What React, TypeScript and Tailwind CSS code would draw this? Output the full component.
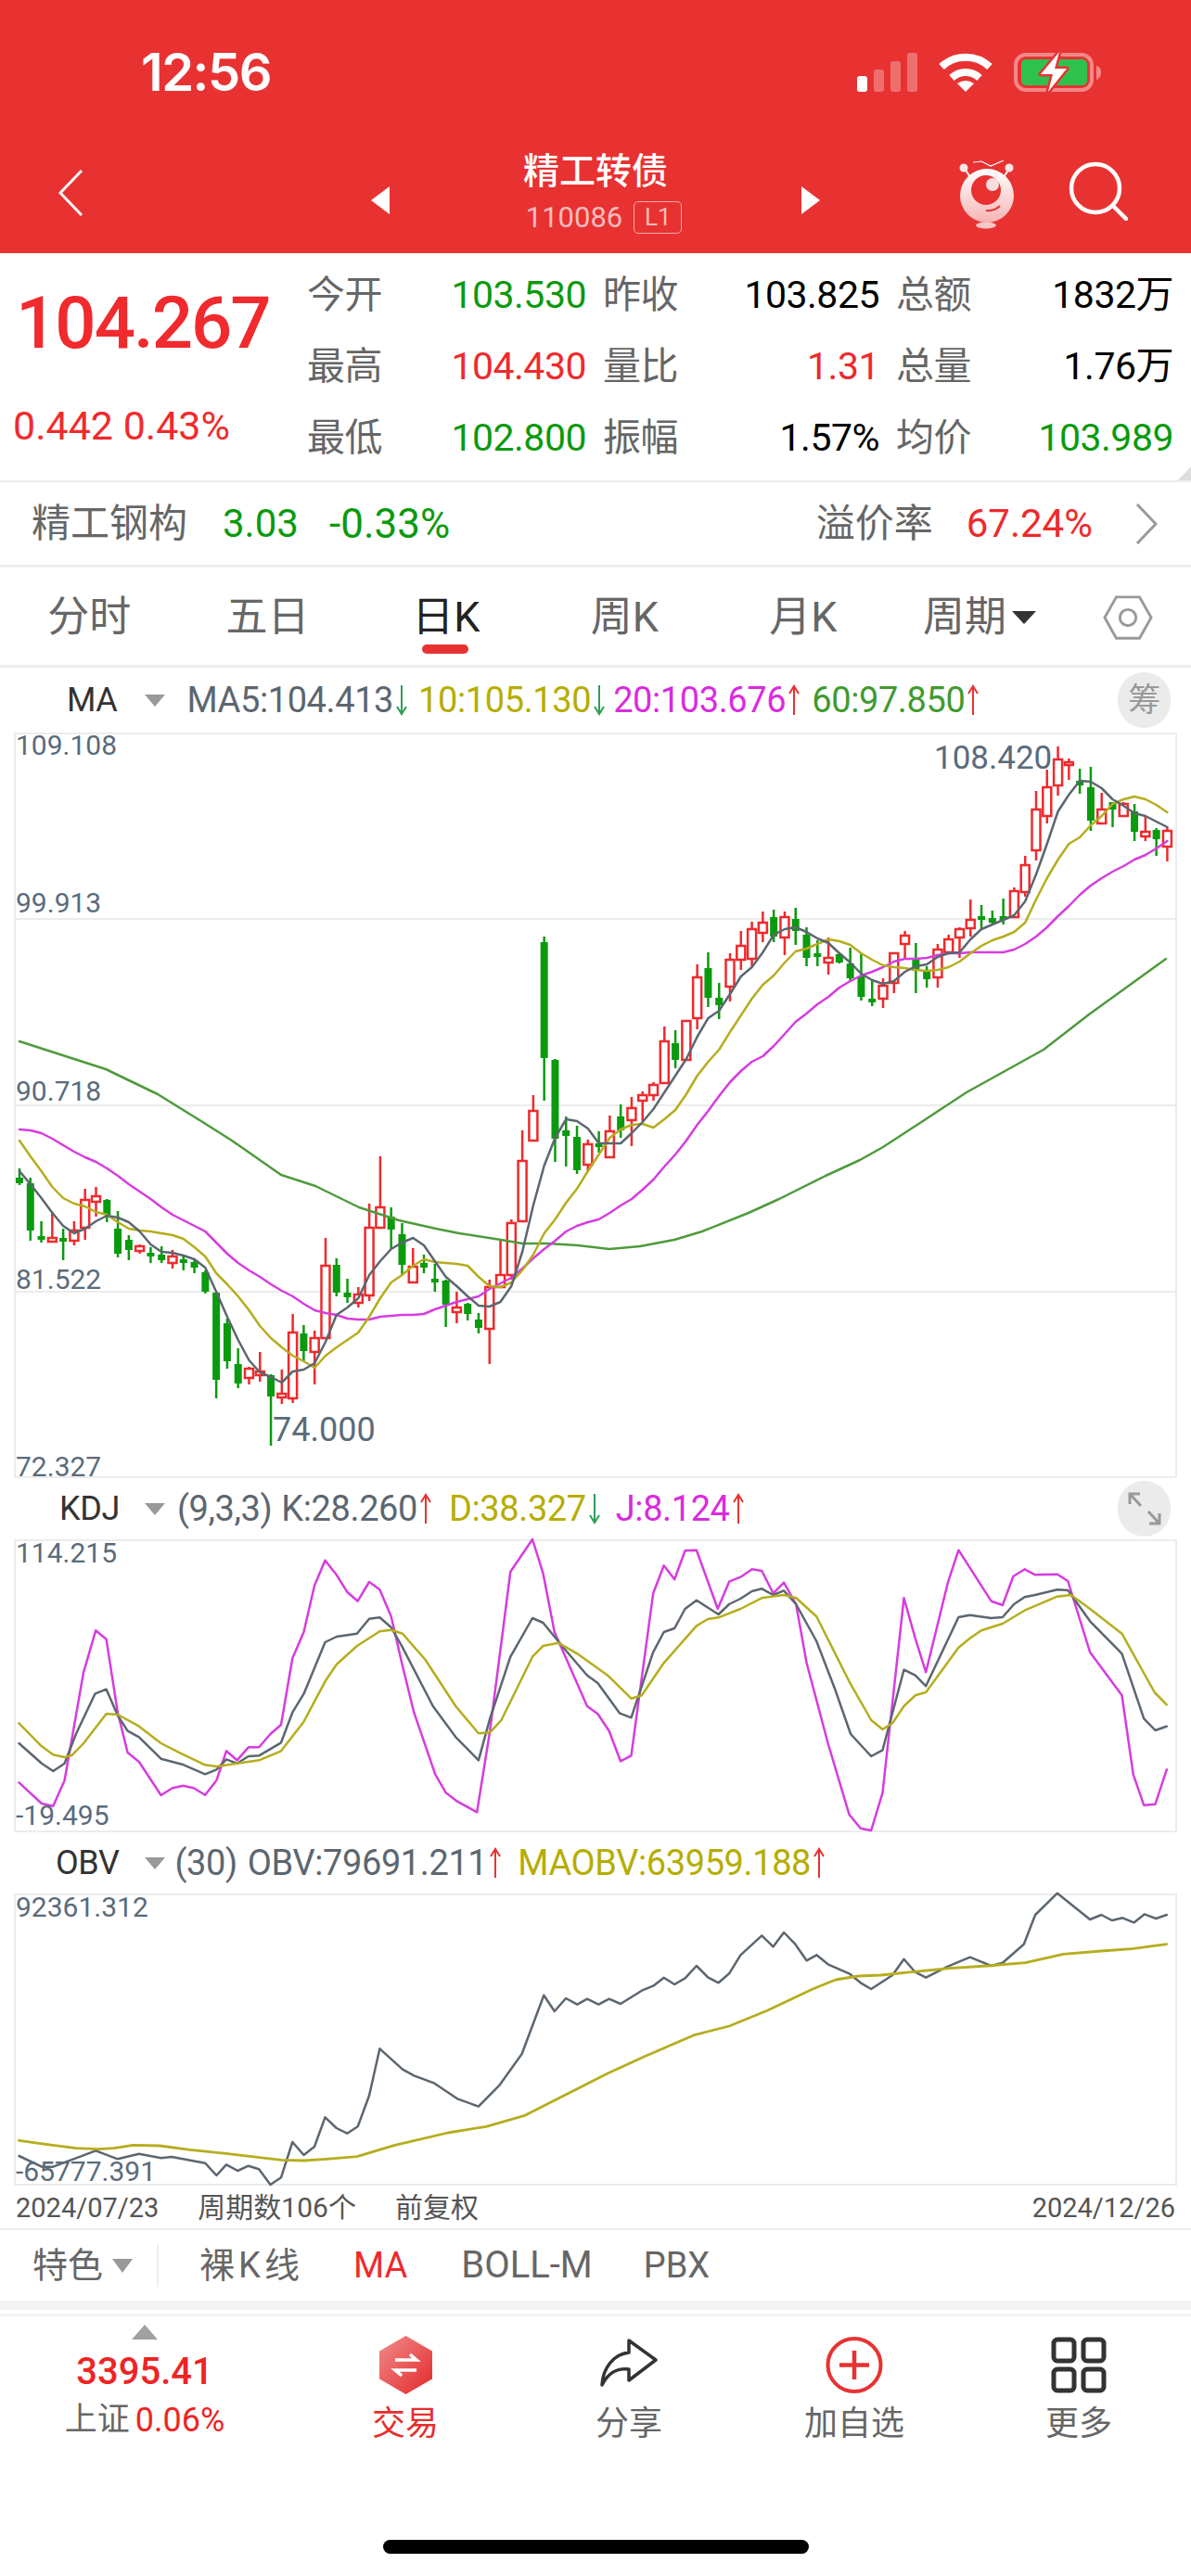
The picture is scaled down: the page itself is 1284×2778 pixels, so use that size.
import type { ReactNode } from 'react';

const RED = '#ee2a2d';
const GREEN = '#0a9a0e';
const C_GRAY = '#5c6670';
const C_OLIVE = '#b5ad1e';
const C_PINK = '#d63ce0';
const C_GREEN = '#4e9a3c';

// [up, high, bodyTop, bodyBottom, low] in page pixels
type Candle = [number, number, number, number, number];
const candles: Candle[] = [
  [0, 1260, 1270, 1276, 1278], [0, 1270, 1276, 1327, 1338], [0, 1317, 1333, 1337, 1340], [1, 1307, 1335, 1339, 1339],
  [0, 1325, 1335, 1337, 1359], [1, 1317, 1327, 1338, 1343], [1, 1282, 1294, 1324, 1337], [1, 1280, 1290, 1296, 1312],
  [0, 1293, 1294, 1310, 1318], [0, 1306, 1325, 1352, 1356], [0, 1332, 1337, 1348, 1359], [1, 1342, 1344, 1349, 1352],
  [0, 1345, 1351, 1353, 1362], [0, 1344, 1353, 1359, 1362], [1, 1348, 1355, 1362, 1368], [0, 1353, 1358, 1360, 1370],
  [0, 1359, 1361, 1367, 1373], [0, 1370, 1372, 1393, 1395], [0, 1393, 1394, 1488, 1508], [0, 1422, 1427, 1468, 1476],
  [0, 1454, 1471, 1492, 1497], [1, 1474, 1476, 1486, 1493], [1, 1458, 1479, 1483, 1490], [0, 1482, 1483, 1506, 1559],
  [1, 1477, 1503, 1507, 1514], [1, 1417, 1437, 1508, 1513], [0, 1429, 1438, 1457, 1468], [1, 1435, 1443, 1458, 1493],
  [1, 1335, 1365, 1443, 1443], [0, 1357, 1364, 1394, 1398], [0, 1379, 1394, 1399, 1405], [1, 1388, 1396, 1405, 1410],
  [1, 1298, 1324, 1397, 1403], [1, 1247, 1302, 1324, 1324], [0, 1302, 1312, 1326, 1347], [0, 1319, 1331, 1364, 1375],
  [1, 1346, 1366, 1383, 1383], [0, 1353, 1362, 1367, 1373], [0, 1363, 1379, 1382, 1393], [0, 1380, 1381, 1407, 1431],
  [1, 1393, 1410, 1415, 1427], [0, 1405, 1406, 1417, 1424], [0, 1416, 1423, 1432, 1438], [1, 1380, 1388, 1433, 1471],
  [1, 1336, 1375, 1388, 1388], [1, 1315, 1319, 1375, 1380], [1, 1219, 1252, 1317, 1317], [1, 1181, 1198, 1230, 1230],
  [0, 1010, 1016, 1141, 1187], [0, 1142, 1143, 1228, 1253], [0, 1204, 1219, 1225, 1258], [0, 1214, 1226, 1262, 1266],
  [1, 1229, 1234, 1256, 1264], [0, 1220, 1233, 1236, 1243], [1, 1203, 1220, 1248, 1248], [0, 1191, 1204, 1219, 1227],
  [1, 1183, 1195, 1208, 1236], [1, 1177, 1181, 1187, 1209], [1, 1167, 1170, 1181, 1187], [1, 1107, 1123, 1168, 1168],
  [0, 1111, 1125, 1143, 1152], [1, 1100, 1101, 1143, 1143], [1, 1040, 1054, 1098, 1110], [0, 1027, 1044, 1076, 1086],
  [0, 1060, 1076, 1084, 1099], [1, 1028, 1035, 1064, 1080], [1, 1004, 1020, 1035, 1046], [1, 994, 1002, 1034, 1042],
  [1, 983, 995, 1006, 1016], [0, 981, 989, 1010, 1016], [1, 983, 989, 1011, 1030], [0, 979, 991, 1004, 1019],
  [0, 1000, 1008, 1033, 1042], [0, 1014, 1028, 1032, 1042], [1, 1011, 1033, 1038, 1051], [0, 1027, 1029, 1038, 1039],
  [0, 1022, 1039, 1055, 1059], [0, 1028, 1053, 1075, 1079], [0, 1056, 1077, 1080, 1085], [1, 1055, 1063, 1077, 1087],
  [1, 1027, 1028, 1060, 1071], [1, 1004, 1009, 1018, 1035], [0, 1017, 1033, 1047, 1071], [0, 1042, 1048, 1056, 1065],
  [1, 1018, 1024, 1054, 1065], [1, 1008, 1013, 1027, 1027], [1, 1000, 1002, 1011, 1033], [1, 970, 992, 1001, 1010],
  [0, 976, 988, 992, 1003], [0, 982, 990, 995, 997], [0, 969, 988, 992, 997], [1, 957, 961, 989, 989],
  [1, 923, 933, 962, 967], [1, 853, 873, 917, 928], [1, 830, 849, 880, 888], [1, 805, 819, 847, 858],
  [1, 818, 822, 825, 841], [0, 829, 842, 847, 856], [0, 827, 849, 885, 896], [1, 855, 873, 888, 888],
  [0, 865, 865, 873, 892], [1, 865, 867, 880, 880], [0, 867, 875, 897, 907], [1, 881, 897, 902, 907],
  [0, 893, 895, 905, 923], [1, 892, 896, 913, 929],
];

const ma5 = [1263,1277,1292,1308,1322,1330,1325,1317,1311,1313,1318,1328,1342,1350,1351,1354,1358,1367,1393,1420,1445,1467,1480,1485,1491,1479,1477,1470,1447,1418,1410,1400,1375,1360,1347,1340,1335,1343,1360,1377,1387,1398,1408,1409,1404,1387,1350,1300,1257,1227,1207,1209,1217,1233,1233,1233,1222,1210,1196,1178,1160,1142,1118,1098,1090,1072,1053,1043,1027,1008,1002,1000,1005,1012,1017,1028,1038,1050,1057,1061,1058,1048,1042,1040,1032,1028,1027,1013,1002,997,992,987,972,943,910,875,857,842,843,850,862,869,877,880,886,892];
const ma10 = [1230,1247,1263,1280,1292,1298,1301,1307,1310,1318,1325,1327,1328,1330,1332,1336,1345,1355,1373,1385,1398,1413,1430,1443,1453,1462,1468,1475,1462,1453,1445,1437,1420,1400,1383,1375,1365,1358,1361,1362,1363,1365,1377,1387,1388,1383,1370,1353,1330,1315,1297,1282,1263,1245,1227,1218,1213,1212,1216,1207,1197,1180,1160,1145,1132,1113,1095,1077,1062,1052,1038,1026,1023,1018,1013,1015,1019,1028,1035,1041,1043,1044,1046,1047,1046,1043,1037,1028,1020,1014,1010,1005,995,970,947,927,910,903,890,880,867,862,859,862,868,876];
const ma20 = [1218,1219,1222,1228,1235,1242,1248,1253,1260,1268,1277,1285,1293,1302,1310,1316,1322,1328,1340,1352,1362,1370,1377,1385,1392,1398,1406,1413,1416,1418,1422,1423,1423,1420,1419,1418,1418,1417,1412,1408,1404,1401,1398,1390,1384,1378,1368,1357,1347,1338,1328,1322,1318,1315,1308,1300,1293,1283,1272,1258,1245,1230,1213,1198,1182,1167,1155,1145,1139,1128,1115,1102,1093,1083,1075,1065,1058,1052,1048,1043,1037,1034,1034,1033,1030,1028,1028,1027,1027,1027,1027,1024,1018,1010,1000,988,977,965,955,947,940,934,927,922,915,907];
const ma60Pts = '21,1123 114,1153 170,1180 220,1211 250,1230 303,1267 340,1279 387,1302 430,1316 470,1325 495,1330 540,1337 563,1341 590,1341 623,1343 657,1347 690,1344 727,1337 757,1328 807,1308 840,1293 890,1268 927,1251 952,1237 1001,1205 1042,1178 1125,1132 1174,1094 1257,1034';

const kdjK = [25,900,55,965,70,990,85,965,100,870,125,740,140,725,155,810,168,860,183,880,212,950,240,968,270,1000,285,985,298,952,312,965,327,942,341,940,370,898,385,800,400,740,428,573,443,555,470,545,486,497,500,493,515,525,530,590,570,780,600,880,630,955,645,820,672,620,701,495,715,510,745,600,773,680,787,705,816,803,831,817,860,605,874,540,888,528,902,465,917,437,946,483,960,450,975,432,990,408,1003,400,1018,420,1032,406,1048,450,1075,570,1100,730,1120,870,1147,942,1162,922,1190,662,1205,680,1219,715,1262,492,1277,485,1305,495,1320,492,1335,450,1349,427,1363,420,1392,403,1406,405,1435,505,1477,610,1506,820,1521,858,1536,845];
const kdjD = [25,835,55,910,70,937,85,945,95,938,110,900,140,805,155,807,183,845,212,900,240,935,270,970,285,975,312,965,341,955,370,925,400,830,428,700,443,645,470,585,500,538,515,533,530,545,560,630,600,780,630,868,645,865,660,825,701,620,715,585,735,575,760,610,800,680,831,755,845,745,874,640,917,520,932,498,946,493,975,465,1003,430,1032,420,1048,430,1075,490,1118,700,1147,825,1162,855,1175,835,1190,780,1205,745,1219,735,1262,590,1277,560,1292,535,1320,513,1349,470,1392,425,1410,420,1435,465,1477,545,1520,735,1536,775];
const kdjJ = [25,1027,55,1095,70,1103,85,1020,110,670,126,535,140,563,155,800,168,930,183,960,212,1068,227,1045,241,1037,255,1045,270,1067,285,1020,298,925,312,955,327,913,341,913,356,870,370,840,385,625,400,540,414,390,428,308,443,355,457,410,471,440,486,378,500,403,515,490,530,650,545,800,573,1000,587,1060,602,1088,628,1123,645,860,672,345,701,240,715,350,730,540,773,780,787,805,802,860,817,958,831,940,860,415,874,325,888,370,902,277,917,275,945,465,960,377,975,362,990,337,1003,342,1018,415,1032,380,1048,450,1062,640,1090,900,1118,1130,1133,1175,1147,1182,1162,1060,1190,430,1205,560,1219,670,1248,380,1262,275,1305,440,1320,453,1334,360,1349,337,1363,355,1392,353,1406,375,1435,605,1477,745,1492,1000,1506,1100,1521,1097,1536,985];
const obv = [25,975,55,1010,70,1010,126,958,155,985,183,968,212,982,226,978,270,998,285,1038,298,1003,313,1023,327,1007,341,1018,356,1068,370,1045,385,930,400,972,414,945,428,850,443,885,457,902,471,880,486,780,500,628,530,695,545,715,572,740,602,790,630,815,658,745,687,645,716,455,730,507,745,465,760,485,773,467,788,485,802,467,817,483,845,440,860,425,874,398,888,420,902,400,917,360,932,397,946,415,960,385,975,325,1003,262,1018,298,1032,252,1047,290,1062,343,1075,325,1090,355,1118,385,1133,415,1147,435,1175,390,1190,338,1205,380,1219,398,1248,362,1277,332,1305,360,1320,350,1348,290,1363,195,1392,125,1435,210,1450,195,1464,213,1478,205,1493,220,1507,193,1522,207,1536,195];
const maobv = [25,925,60,937,100,950,130,953,150,950,175,940,210,942,250,955,300,968,370,988,400,990,430,985,470,977,520,940,590,900,640,880,690,845,750,770,800,708,850,652,915,583,960,555,1010,505,1070,435,1100,405,1130,393,1160,390,1200,380,1250,368,1300,360,1350,350,1400,322,1450,312,1490,305,1536,290];

const candleX = (i: number) => 21 + i * 11.785;
const byIndex = (ys: number[]) => ys.map((y, i) => `${candleX(i).toFixed(1)},${y}`).join(' ');
// traced pairs are in the squeezed crop's coordinates
const traced = (pts: number[], top: number) => {
  const out: string[] = [];
  for (let i = 0; i < pts.length; i += 2) out.push(`${(pts[i] / 1.2212).toFixed(1)},${(top + pts[i + 1] / 3).toFixed(1)}`);
  return out.join(' ');
};

function Line({ points, color, width = 2.5 }: { points: string; color: string; width?: number }) {
  return <polyline points={points} fill="none" stroke={color} strokeWidth={width} strokeLinejoin="round" strokeLinecap="round" />;
}

function Panel({ h, viewBox, children, labels }: { h: string; viewBox: string; children: ReactNode; labels: ReactNode }) {
  return (
    <div className={`relative mx-[15px] w-[1254px] shrink-0 border-2 border-[#ececec] ${h}`}>
      <svg className="block h-full w-full overflow-visible" viewBox={viewBox}>
        {children}
      </svg>
      {labels}
    </div>
  );
}

function AxisLabel({ top, children }: { top: string; children: ReactNode }) {
  return <span className={`absolute left-0 text-[30px] leading-none text-[#5a6b7b] ${top}`}>{children}</span>;
}

function Arrow({ up, color }: { up?: boolean; color: string }) {
  return (
    <svg className="ml-[1px] shrink-0" width="16" height="34" viewBox="0 0 16 34" fill="none" stroke={color} strokeWidth="2">
      {up ? <path d="M8 33V2M3 10L8 2L13 10" /> : <path d="M8 1V32M3 24L8 32L13 24" />}
    </svg>
  );
}

function Caret({ className = '' }: { className?: string }) {
  return <span className={`h-0 w-0 border-x-[11px] border-t-[13px] border-x-transparent border-t-[#999] ${className}`} />;
}

function StatusIcons() {
  return (
    <div className="flex items-center pr-[95px]">
      <svg width="66" height="42" viewBox="0 0 66 42">
        <rect x="0" y="25" width="11" height="17" rx="3" fill="#fff" />
        <rect x="18" y="18" width="11" height="24" rx="3" fill="#fff" opacity=".3" />
        <rect x="36" y="9" width="11" height="33" rx="3" fill="#fff" opacity=".3" />
        <rect x="54" y="0" width="11" height="42" rx="3" fill="#fff" opacity=".3" />
      </svg>
      <svg className="ml-[22px]" width="58" height="42" viewBox="0 0 58 42" fill="none" stroke="#fff">
        <path d="M3 15A38 38 0 0 1 55 15" strokeWidth="8" />
        <path d="M14 27A22 22 0 0 1 44 27" strokeWidth="8" />
        <path d="M20 33Q29 27 38 33L29 42Z" fill="#fff" stroke="none" />
      </svg>
      <svg className="ml-[23px]" width="96" height="46" viewBox="0 0 96 46">
        <rect x="2" y="4" width="82" height="38" rx="11" fill="none" stroke="#fff" strokeOpacity=".42" strokeWidth="4" />
        <rect x="8" y="9" width="71" height="28" rx="5" fill="#2fc14e" />
        <path d="M89 16C93 17 94 20 94 23C94 26 93 29 89 31Z" fill="#fff" opacity=".42" />
        <path d="M49 1L29 25H42L37 44L57 19H44Z" fill="#fff" stroke="#e83232" strokeWidth="5" paintOrder="stroke" strokeLinejoin="round" />
      </svg>
    </div>
  );
}

function RobotIcon() {
  return (
    <svg width="60" height="74" viewBox="1034 170 60 74">
      <defs>
        <linearGradient id="ball" x1="0" y1="0" x2="0" y2="1">
          <stop offset="0" stopColor="#fff" />
          <stop offset="1" stopColor="#f7b4b4" />
        </linearGradient>
      </defs>
      <path d="M1049 172L1058 171L1068 176L1082 170" fill="none" stroke="#fff" strokeWidth="1.2" />
      <path d="M1040 179L1046 188M1088 179L1082 188" stroke="#fff" strokeWidth="2" />
      <circle cx="1039" cy="178" r="4.5" fill="#fde6e6" />
      <circle cx="1088" cy="178" r="4.5" fill="#fde6e6" />
      <circle cx="1064" cy="208" r="29" fill="url(#ball)" />
      <circle cx="1063" cy="202" r="16" fill="#e83232" />
      <circle cx="1070" cy="196" r="7" fill="#fbdede" />
      <path d="M1063 224Q1072 225 1078 219" fill="none" stroke="#e83232" strokeWidth="2" />
      <ellipse cx="1063" cy="240" rx="11" ry="3.5" fill="#f8c6c6" />
    </svg>
  );
}

function Header() {
  return (
    <div className="h-[273px] shrink-0 bg-[#e83232] text-white">
      <div className="flex h-[150px] items-center justify-between pl-[152px] pt-[6px]">
        <span className="font-['Inter',sans-serif] text-[56px] font-semibold leading-none tracking-[-1.5px]">12:56</span>
        <StatusIcons />
      </div>
      <div className="flex h-[123px] items-center">
        <div className="-mt-[8px] w-[400px] pl-[63px]">
          <svg className="block" width="26" height="50" viewBox="0 0 26 50" fill="none" stroke="#fff" strokeWidth="3">
            <path d="M25 1L2 25L25 49" />
          </svg>
        </div>
        <span className="mt-[8px] h-0 w-0 border-y-[15px] border-r-[20px] border-y-transparent border-r-white" />
        <div className="flex w-[444px] flex-col items-center pb-[8px]">
          <span className="text-[39px] font-medium leading-[44px]">精工转债</span>
          <div className="mt-[10px] flex items-center gap-[12px] pl-[18px]">
            <span className="text-[31px] leading-[34px] text-[#f7bcbc]">110086</span>
            <span className="flex h-[35px] w-[52px] items-center justify-center rounded-[5px] border-[1.5px] border-[#f3a9a9] text-[26px] text-[#f7bcbc]">L1</span>
          </div>
        </div>
        <span className="mt-[8px] h-0 w-0 border-y-[15px] border-l-[20px] border-y-transparent border-l-white" />
        <div className="-mt-[4px] ml-[150px]">
          <RobotIcon />
        </div>
        <svg className="-mt-[12px] ml-[58px]" width="64" height="64" viewBox="0 0 64 64" fill="none" stroke="#fff" strokeWidth="4.5" strokeLinecap="round">
          <circle cx="29" cy="29" r="26" />
          <path d="M48 48L62 62" />
        </svg>
      </div>
    </div>
  );
}

function Stat({ label, value, color, first }: { label: string; value: string; color: string; first?: boolean }) {
  return (
    <>
      <span className={`text-[41px] text-[#666] ${first ? '' : 'pl-[18px]'}`}>{label}</span>
      <span className={`text-right text-[41px] ${color}`}>{value}</span>
    </>
  );
}

function Quote() {
  return (
    <div className="relative flex h-[247px] shrink-0 border-b-2 border-[#eeeeee]">
      <div className="flex w-[331px] flex-col pl-[14px] pt-[36px]">
        <span className="pl-[3px] text-[78px] font-medium leading-[80px] tracking-[-2px] text-[#f02a2d]">104.267</span>
        <span className="mt-[50px] whitespace-nowrap text-[43px] leading-[40px] text-[#f02a2d]">0.442 0.43%</span>
      </div>
      <div className="grid grid-cols-[83px_218px_100px_216px_100px_217px] grid-rows-[77px_77px_77px] items-center pt-[7px] leading-none tracking-[-0.5px]">
        <Stat first label="今开" value="103.530" color="text-[#0a9a0e]" />
        <Stat label="昨收" value="103.825" color="text-black" />
        <Stat label="总额" value="1832万" color="text-black" />
        <Stat first label="最高" value="104.430" color="text-[#ee2a2d]" />
        <Stat label="量比" value="1.31" color="text-[#ee2a2d]" />
        <Stat label="总量" value="1.76万" color="text-black" />
        <Stat first label="最低" value="102.800" color="text-[#0a9a0e]" />
        <Stat label="振幅" value="1.57%" color="text-black" />
        <Stat label="均价" value="103.989" color="text-[#0a9a0e]" />
      </div>
      <span className="absolute bottom-0 right-0 h-0 w-0 border-b-[15px] border-l-[14px] border-b-[#dddddd] border-l-transparent" />
    </div>
  );
}

function Related() {
  return (
    <div className="flex h-[92px] shrink-0 items-center border-b-[3px] border-[#eeeeee] pl-[34px] text-[42px] leading-none">
      <span className="w-[206px] text-[#666]">精工钢构</span>
      <span className="w-[115px] text-[#0a9a0e]">3.03</span>
      <span className="text-[44px] text-[#0a9a0e]">-0.33%</span>
      <span className="ml-auto text-[#666]">溢价率</span>
      <span className="ml-[36px] text-[#ee2a2d]">67.24%</span>
      <svg className="ml-[46px] mr-[36px]" width="24" height="44" viewBox="0 0 24 44" fill="none" stroke="#999" strokeWidth="3">
        <path d="M2 1L22 22L2 43" />
      </svg>
    </div>
  );
}

function Tabs() {
  return (
    <div className="flex h-[108px] shrink-0 items-center border-b-[3px] border-[#eeeeee] pt-[2px] text-[45px] leading-none text-[#666]">
      <div className="grid w-[962px] grid-cols-5 text-center">
        <span>分时</span>
        <span>五日</span>
        <span className="relative text-[#222]">
          日K
          <span className="absolute left-[70px] top-[52px] h-[10px] w-[50px] rounded-full bg-[#e83232]" />
        </span>
        <span>周K</span>
        <span>月K</span>
      </div>
      <span className="ml-[33px]">周期</span>
      <span className="ml-[6px] h-0 w-0 border-x-[13px] border-t-[14px] border-x-transparent border-t-[#333]" />
      <svg className="ml-[72px]" width="54" height="50" viewBox="0 0 56 50" fill="none" stroke="#999" strokeWidth="3">
        <path d="M15 2H41L54 25L41 48H15L2 25Z" />
        <circle cx="28" cy="25" r="9" />
      </svg>
    </div>
  );
}

function LegendRow({ name, nameClass, children, button, h }: { name: string; nameClass: string; children: ReactNode; button: ReactNode; h: string }) {
  return (
    <div className={`flex shrink-0 items-center text-[38px] leading-none tracking-[-0.4px] ${h}`}>
      <span className={`text-[36px] text-[#333] ${nameClass}`}>{name}</span>
      <Caret className="absolute left-[156px]" />
      {children}
      {button && <div className="ml-auto mr-[22px] flex h-[60px] w-[57px] items-center justify-center rounded-full bg-[#ebebeb]">{button}</div>}
    </div>
  );
}

function MainChart() {
  return (
    <Panel
      h="h-[804px]"
      viewBox="17 792 1250 800"
      labels={
        <>
          <AxisLabel top="top-[-3px]">109.108</AxisLabel>
          <AxisLabel top="top-[167px]">99.913</AxisLabel>
          <AxisLabel top="top-[370px]">90.718</AxisLabel>
          <AxisLabel top="top-[573px]">81.522</AxisLabel>
          <AxisLabel top="top-[775px]">72.327</AxisLabel>
          <span className="absolute left-[277px] top-[732px] text-[36px] leading-none text-[#5a6b7b]">74.000</span>
          <span className="absolute left-[990px] top-[8px] text-[35px] leading-none text-[#5a6b7b]">108.420</span>
        </>
      }
    >
      {[991, 1192, 1393].map(y => (
        <line key={y} x1="17" x2="1267" y1={y} y2={y} stroke="#ececec" strokeWidth="2" />
      ))}
      {candles.map(([up, high, top, bottom, low], i) => {
        const x = candleX(i);
        const h = Math.max(bottom - top, 2);
        if (up) {
          return (
            <g key={i} stroke={RED} fill="none">
              <path d={`M${x} ${high}V${top}M${x} ${bottom}V${low}`} strokeWidth="2.5" />
              <rect x={x - 4.5} y={top} width="9" height={h} fill="#fff" strokeWidth="2.5" />
            </g>
          );
        }
        return (
          <g key={i} fill={GREEN}>
            <path d={`M${x} ${high}V${low}`} stroke={GREEN} strokeWidth="2.5" />
            <rect x={x - 4} y={top} width="8" height={Math.max(h, 4)} />
          </g>
        );
      })}
      <Line points={ma60Pts} color={C_GREEN} />
      <Line points={byIndex(ma20)} color={C_PINK} />
      <Line points={byIndex(ma10)} color={C_OLIVE} />
      <Line points={byIndex(ma5)} color={C_GRAY} />
    </Panel>
  );
}

function BottomNav() {
  return (
    <div className="grid grid-cols-[312px_250px_232px_254px_230px] text-[36px] leading-none text-[#666]">
      <div className="flex flex-col items-center pt-[9px]">
        <span className="h-0 w-0 border-x-[14px] border-b-[16px] border-x-transparent border-b-[#a0a0a0]" />
        <span className="mt-[15px] text-[40px] font-medium leading-[40px] text-[#ee2424]">3395.41</span>
        <div className="mt-[15px] flex items-center leading-[34px]">
          <span className="text-[35px]">上证</span>
          <span className="ml-[6px] text-[#ee2424]">0.06%</span>
        </div>
      </div>
      <div className="flex flex-col items-center pt-[21px] text-[#e62e2e]">
        <svg width="57" height="63" viewBox="0 0 57 63">
          <defs>
            <linearGradient id="hex" x1="0" y1="0" x2="1" y2="1">
              <stop offset="0" stopColor="#f18a8a" />
              <stop offset="1" stopColor="#e42a2a" />
            </linearGradient>
          </defs>
          <path d="M28.5 1L56 17V46L28.5 62L1 46V17Z" fill="url(#hex)" stroke="url(#hex)" strokeWidth="2" strokeLinejoin="round" />
          <path d="M17 26H40L33 20M40 37H17L24 43" fill="none" stroke="#fff" strokeWidth="3.5" />
        </svg>
        <span className="mt-[14px]">交易</span>
      </div>
      <div className="flex flex-col items-center pt-[21px]">
        <svg width="64" height="63" viewBox="-1 -3 64 63" fill="none" stroke="#333" strokeWidth="3.5" strokeLinejoin="round">
          <path d="M31 2L60 23L31 45V33C18 31 8 38 2 50C3 32 14 17 31 15Z" />
        </svg>
        <span className="mt-[14px]">分享</span>
      </div>
      <div className="flex flex-col items-center pt-[21px]">
        <svg width="62" height="63" viewBox="0 0 62 63" fill="none" stroke="#e83232" strokeWidth="4">
          <circle cx="31" cy="31.5" r="28.5" />
          <path d="M15 31.5H47M31 16V47" strokeWidth="4.5" />
        </svg>
        <span className="mt-[14px]">加自选</span>
      </div>
      <div className="flex flex-col items-center pt-[21px]">
        <svg width="60" height="63" viewBox="0 0 60 63" fill="none" stroke="#333" strokeWidth="5">
          <rect x="3" y="4" width="22" height="23" rx="4" />
          <rect x="35" y="4" width="22" height="23" rx="4" />
          <rect x="3" y="36" width="22" height="23" rx="4" />
          <rect x="35" y="36" width="22" height="23" rx="4" />
        </svg>
        <span className="mt-[14px]">更多</span>
      </div>
    </div>
  );
}

export default function App() {
  return (
    <div className="relative flex h-[2778px] w-[1284px] flex-col overflow-hidden bg-white font-['Roboto','Noto_Sans_CJK_SC',sans-serif]">
      <Header />
      <Quote />
      <Related />
      <Tabs />

      <LegendRow
        h="h-[70px]"
        name="MA"
        nameClass="ml-[72px]"
        button={<span className="text-[35px] text-[#999]">筹</span>}
      >
        <span className="ml-[75px] text-[#5c6670]">MA5:104.413</span>
        <Arrow color="#2f9e56" />
        <span className="ml-[10px] text-[#b5ad00]">10:105.130</span>
        <Arrow color="#2f9e56" />
        <span className="ml-[7px] text-[#d92be0]">20:103.676</span>
        <Arrow up color="#e83232" />
        <span className="ml-[11px] text-[#3f9a2f]">60:97.850</span>
        <Arrow up color="#e83232" />
      </LegendRow>
      <MainChart />

      <LegendRow
        h="h-[66px]"
        name="KDJ"
        nameClass="ml-[64px]"
        button={
          <svg width="40" height="40" viewBox="0 0 40 40" fill="none" stroke="#999" strokeWidth="3">
            <path d="M4 15V4H15M4 4L16 17M36 25V36H25M36 36L24 23" />
          </svg>
        }
      >
        <span className="ml-[62px] text-[#5c6670]">(9,3,3)</span>
        <span className="ml-[10px] text-[#5c6670]">K:28.260</span>
        <Arrow up color="#e83232" />
        <span className="ml-[17px] text-[#b5ad00]">D:38.327</span>
        <Arrow color="#2f9e56" />
        <span className="ml-[15px] text-[#d92be0]">J:8.124</span>
        <Arrow up color="#e83232" />
      </LegendRow>
      <Panel
        h="h-[316px]"
        viewBox="17 1662 1250 312"
        labels={
          <>
            <AxisLabel top="top-[-2px]">114.215</AxisLabel>
            <AxisLabel top="top-[281px]">-19.495</AxisLabel>
          </>
        }
      >
        <Line points={traced(kdjJ, 1580)} color={C_PINK} />
        <Line points={traced(kdjK, 1580)} color={C_GRAY} />
        <Line points={traced(kdjD, 1580)} color={C_OLIVE} />
      </Panel>

      <LegendRow h="h-[66px]" name="OBV" nameClass="ml-[60px]" button={null}>
        <span className="ml-[60px] text-[#5c6670]">(30)</span>
        <span className="ml-[11px] text-[#5c6670]">OBV:79691.211</span>
        <Arrow up color="#e83232" />
        <span className="ml-[16px] text-[#b5ad00]">MAOBV:63959.188</span>
        <Arrow up color="#e83232" />
      </LegendRow>
      <Panel
        h="h-[315px]"
        viewBox="17 2044 1250 311"
        labels={
          <>
            <AxisLabel top="top-[-2px]">92361.312</AxisLabel>
            <AxisLabel top="top-[283px]">-65777.391</AxisLabel>
          </>
        }
      >
        <Line points={traced(obv, 2000)} color={C_GRAY} />
        <Line points={traced(maobv, 2000)} color={C_OLIVE} width={2.8} />
      </Panel>

      <div className="flex h-[48px] shrink-0 items-center border-b-2 border-[#eeeeee] pl-[17px] pr-[17px] pt-[2px] text-[29px] leading-none text-[#555]">
        <span>2024/07/23</span>
        <span className="ml-[42px] text-[30px]">周期数106个</span>
        <span className="ml-[42px] text-[30px]">前复权</span>
        <span className="ml-auto">2024/12/26</span>
      </div>

      <div className="flex h-[76px] shrink-0 items-center pl-[35px] text-[40px] leading-none text-[#666]">
        <span className="text-[38px]">特色</span>
        <span className="ml-[10px] h-0 w-0 border-x-[11px] border-t-[15px] border-x-transparent border-t-[#999]" />
        <span className="ml-[26px] h-[46px] w-[2px] bg-[#eeeeee]" />
        <span className="ml-[44px] text-[38px]">裸<span className="mx-[4px]">K</span>线</span>
        <span className="ml-[58px] text-[38px] text-[#ee2a2d]">MA</span>
        <span className="ml-[58px]">BOLL-M</span>
        <span className="ml-[55px] text-[38px]">PBX</span>
      </div>
      <div className="h-[10px] shrink-0 bg-[#f4f4f4]" />
      <div className="h-[4px] shrink-0" />
      <div className="h-[3px] shrink-0 bg-[#f4f4f4]" />

      <BottomNav />
      <div className="absolute bottom-[24px] left-[413px] h-[15px] w-[459px] rounded-full bg-black" />
    </div>
  );
}
